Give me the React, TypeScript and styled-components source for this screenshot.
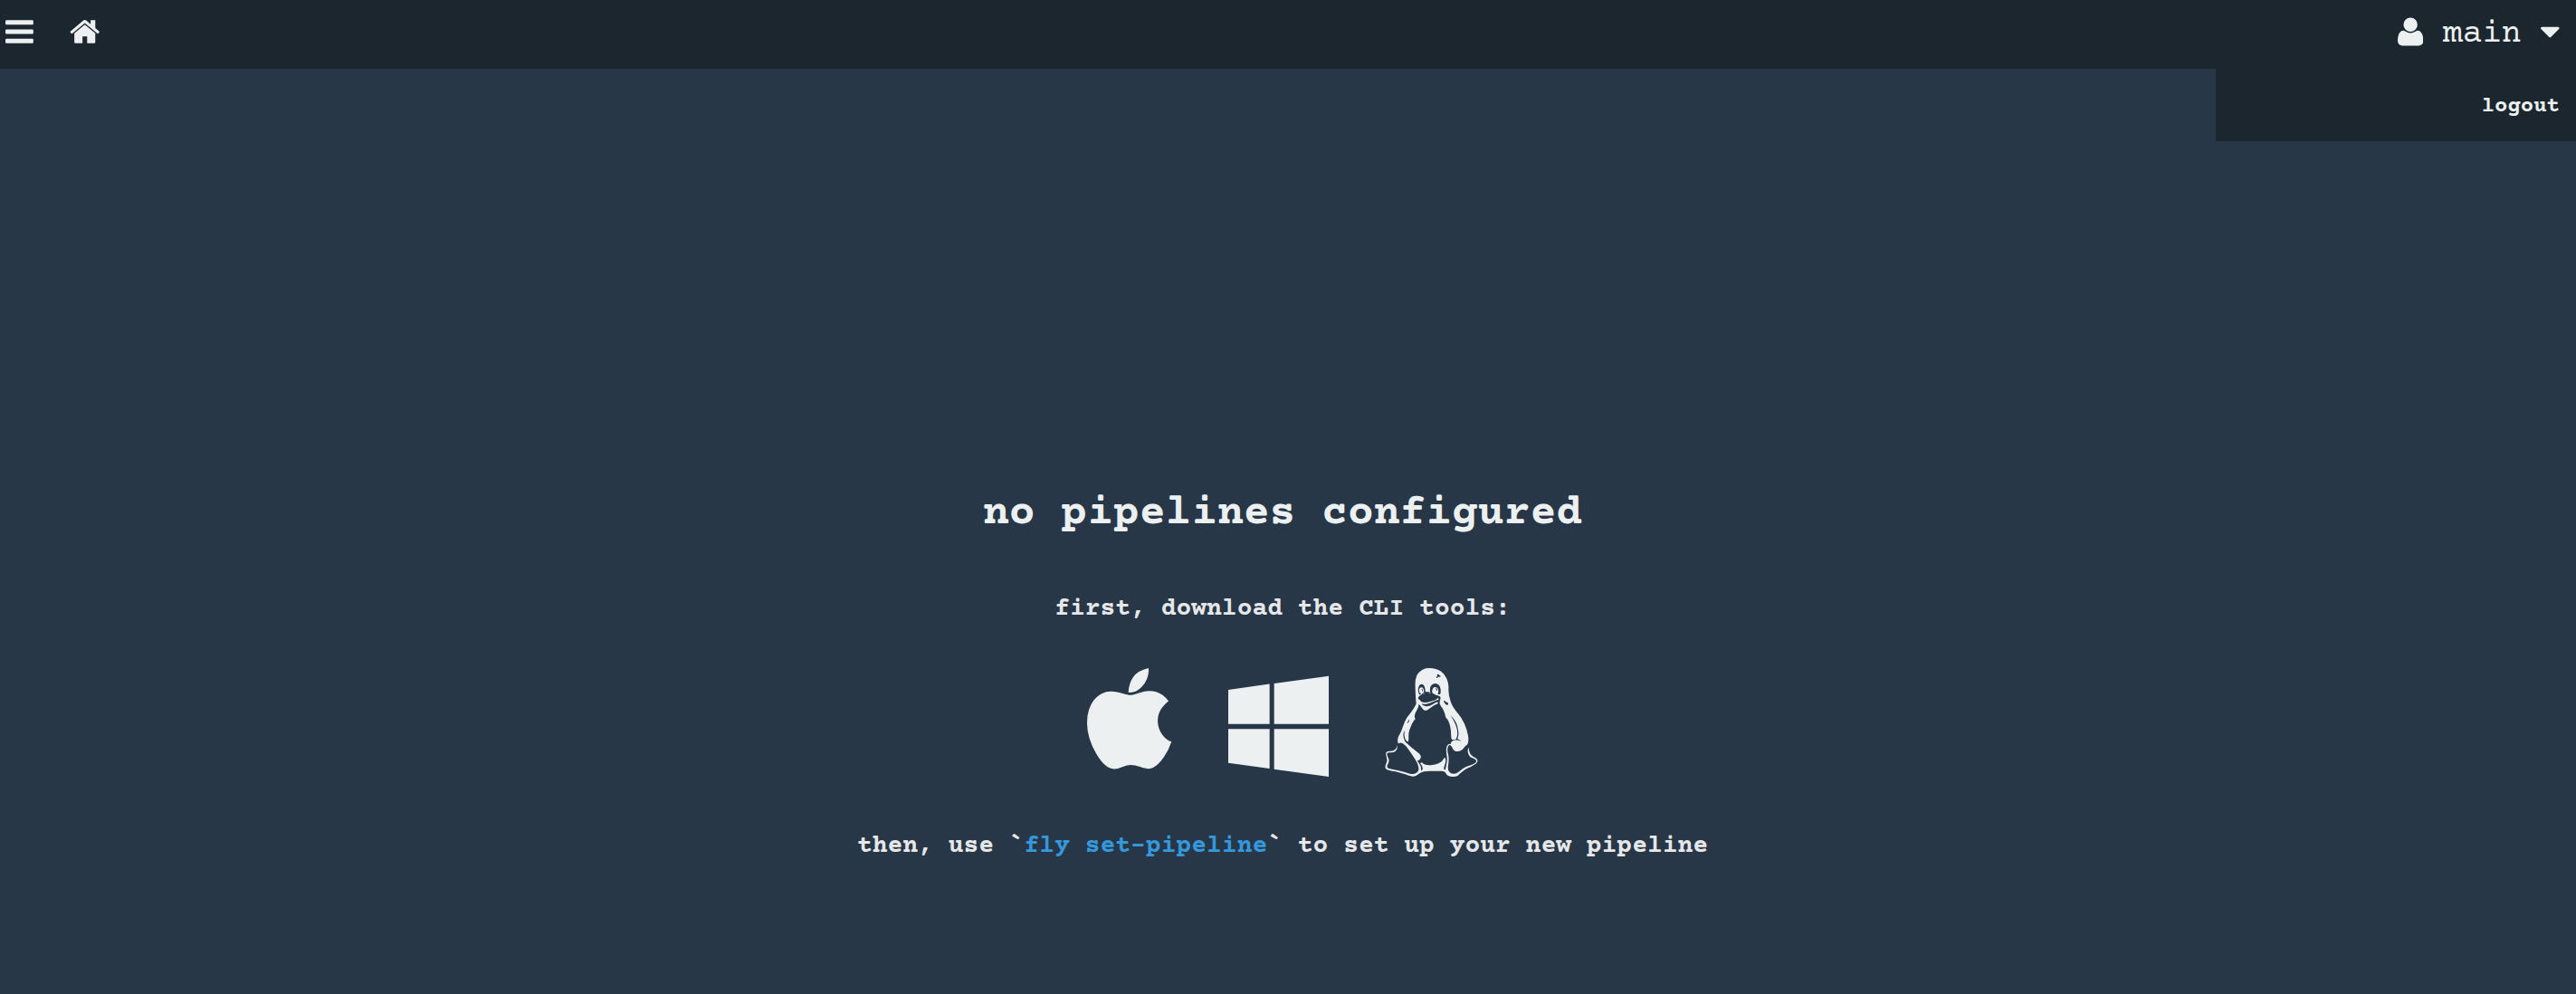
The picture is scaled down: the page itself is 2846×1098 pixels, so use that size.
import React, { useState } from "react";
import styled, { createGlobalStyle } from "styled-components";

const color = {
  page: "#273747",
  bar: "#1c262f",
  text: "#ecf0f1",
  muted: "#e6e7e8",
  accent: "#3498db",
};

const GlobalStyle = createGlobalStyle`
  * { box-sizing: border-box; }
  body {
    margin: 0;
    background: ${color.page};
    color: ${color.text};
    font-family: "Courier Prime", "Courier New", "Liberation Mono", monospace;
  }
`;

const Page = styled.div`
  min-height: 100vh;
  display: flex;
  flex-direction: column;
`;

const TopBar = styled.header`
  position: relative;
  display: flex;
  justify-content: space-between;
  align-items: center;
  height: 76px;
  padding: 0 18px 6px 6px;
  background: ${color.bar};
`;

const Nav = styled.nav`
  display: flex;
  align-items: center;
  gap: 40px;
`;

const IconButton = styled.button`
  display: flex;
  padding: 0;
  border: 0;
  background: none;
  color: inherit;
  cursor: pointer;
`;

const IconLink = styled.a`
  display: flex;
  color: inherit;
`;

const UserButton = styled(IconButton)`
  align-items: center;
  gap: 22px;
  font-family: inherit;
  font-size: 36px;
  line-height: 36px;
`;

const TeamName = styled.span`
  padding-top: 6px;
`;

const UserMenu = styled.div`
  position: absolute;
  top: 100%;
  right: 0;
  width: 14%;
  display: flex;
  justify-content: flex-end;
  padding: 30px 18px 26px;
  background: ${color.bar};
`;

const MenuLink = styled.a`
  color: inherit;
  font-size: 24px;
  font-weight: bold;
  line-height: 24px;
  text-decoration: none;
`;

const Welcome = styled.main`
  flex: 1;
  display: flex;
  flex-direction: column;
  align-items: center;
  padding: 463px 12px 0 0;
`;

const Title = styled.h1`
  margin: 0 0 62px;
  font-size: 48px;
  line-height: 56px;
`;

const Step = styled.h2`
  margin: 0;
  color: ${color.muted};
  font-size: 28px;
  line-height: 32px;
`;

const DocLink = styled.a`
  color: ${color.accent};
  text-decoration: none;
`;

const Downloads = styled.div`
  display: flex;
  gap: 62px;
  margin: 49px 0 61px;
`;

const Glyph = styled.svg<{ $size: number }>`
  display: block;
  height: ${(p) => p.$size}px;
  fill: currentColor;
`;

type GlyphName = "bars" | "home" | "user" | "caret" | "apple" | "windows" | "linux";

const glyphs: Record<GlyphName, { x: number; width: number; d: string; flip?: boolean }> = {
  bars: {
    x: 128,
    width: 1536,
    d: "M1664 1344v128q0 26-19 45t-45 19h-1408q-26 0-45-19t-19-45v-128q0-26 19-45t45-19h1408q26 0 45 19t19 45zm0-512v128q0 26-19 45t-45 19h-1408q-26 0-45-19t-19-45v-128q0-26 19-45t45-19h1408q26 0 45 19t19 45zm0-512v128q0 26-19 45t-45 19h-1408q-26 0-45-19t-19-45v-128q0-26 19-45t45-19h1408q26 0 45 19t19 45z",
  },
  home: {
    x: 64,
    width: 1664,
    d: "M1472 992v480q0 26-19 45t-45 19h-384v-384h-256v384h-384q-26 0-45-19t-19-45v-480q0-1 .5-3t.5-3l575-474 575 474q1 2 1 6zm223-69l-62 74q-8 9-21 11h-3q-13 0-21-7l-692-577-692 577q-12 8-24 7-13-2-21-11l-62-74q-8-10-7-23.5t11-21.5l719-599q32-26 76-26t76 26l244 204v-195q0-14 9-23t23-9h192q14 0 23 9t9 23v408l219 182q10 8 11 21.5t-7 23.5z",
  },
  user: {
    x: 192,
    width: 1408,
    d: "M1600 1405q0 120-73 189.5t-194 69.5h-874q-121 0-194-69.5t-73-189.5q0-53 3.5-103.5t14-109 26.5-108.5 43-97.5 62-81 85.5-53.5 111.5-20q9 0 42 21.5t74.5 48 108 48 133.5 21.5 133.5-21.5 108-48 74.5-48 42-21.5q61 0 111.5 20t85.5 53.5 62 81 43 97.5 26.5 108.5 14 109 3.5 103.5zm-320-893q0 159-112.5 271.5t-271.5 112.5-271.5-112.5-112.5-271.5 112.5-271.5 271.5-112.5 271.5 112.5 112.5 271.5z",
  },
  caret: {
    x: 384,
    width: 1024,
    d: "M1408 704q0 26-19 45l-448 448q-19 19-45 19t-45-19l-448-448q-19-19-19-45t19-45 45-19h896q26 0 45 19t19 45z",
  },
  apple: {
    x: 192,
    width: 1408,
    d: "M1585 1215q-39 125-123 250-129 196-257 196-49 0-140-32-86-32-151-32-61 0-142 33-81 34-132 34-152 0-301-259-147-261-147-503 0-228 113-374 113-144 284-144 72 0 177 30 104 30 138 30 45 0 143-34 102-34 173-34 119 0 213 65 52 36 104 100-79 67-114 118-65 94-65 207 0 124 69 223t158 126zm-376-1173q0 61-29 136-30 75-93 138-54 54-108 72-37 11-104 17 3-149 78-257 74-107 250-148 1 3 2.5 11t2.5 11q0 4 .5 10t.5 10z",
  },
  windows: {
    x: 64,
    width: 1664,
    d: "M746 1006v651l-682-94v-557h682zm0-743v659h-682v-565zm982 743v786l-907-125v-661h907zm0-878v794h-907v-669z",
  },
  linux: {
    x: 0,
    width: 1536,
    flip: true,
    d: "M663 1125q-11 -1 -15.5 -10.5t-8.5 -9.5q-5 -1 -5 5q0 12 19 15h10zM750 1111q-4 -1 -11.5 6.5t-17.5 4.5q24 11 32 -2q3 -6 -3 -9zM399 684q-4 1 -6 -3t-4.5 -12.5t-5.5 -13.5t-10 -13q-7 -10 -1 -12q4 -1 12.5 7t12.5 18q1 3 2 7t2 6t1.5 4.5t0.5 4v3t-1 2.5t-3 2zM1254 325q0 18 -55 42q4 15 7.5 27.5t5 26t3 21.5t0.5 22.5t-1 19.5t-3.5 22t-4 20.5t-5 25t-5.5 26.5q-10 48 -47 103t-72 75q24 -20 57 -83q87 -162 54 -278q-11 -40 -50 -42q-31 -4 -38.5 18.5t-8 83.5t-11.5 107q-9 39 -19.5 69t-19.5 45.5t-15.5 24.5t-13 15t-7.5 7q-14 62 -31 103t-29.5 56t-23.5 33t-15 40q-4 21 6 53.5t4.5 49.5t-44.5 25q-15 3 -44.5 18t-35.5 16q-8 1 -11 26t8 51t36 27q37 3 51 -30t4 -58q-11 -19 -2 -26.5t30 -0.5q13 4 13 36v37q-5 30 -13.5 50t-21 30.5t-23.5 15t-27 7.5q-107 -8 -89 -134q0 -15 -1 -15q-9 9 -29.5 10.5t-33 -0.5t-15.5 5q1 57 -16 90t-45 34q-27 1 -41.5 -27.5t-16.5 -59.5q-1 -15 3.5 -37t13 -37.5t15.5 -13.5q10 3 16 14q4 9 -7 8q-7 0 -15.5 14.5t-9.5 33.5q-1 22 9 37t34 14q17 0 27 -21t9.5 -39t-1.5 -22q-22 -15 -31 -29q-8 -12 -27.5 -23.5t-20.5 -12.5q-13 -14 -15.5 -27t7.5 -18q14 -8 25 -19.5t16 -19t18.5 -13t35.5 -6.5q47 -2 102 15q2 1 23 7t34.5 10.5t29.5 13t21 17.5q9 14 20 8q5 -3 6.5 -8.5t-3 -12t-16.5 -9.5q-20 -6 -56.5 -21.5t-45.5 -19.5q-44 -19 -70 -23q-25 -5 -79 2q-10 2 -9 -2t17 -19q25 -23 67 -22q17 1 36 7t36 14t33.5 17.5t30 17t24.5 12t17.5 2.5t8.5 -11q0 -2 -1 -4.5t-4 -5t-6 -4.5t-8.5 -5t-9 -4.5t-10 -5t-9.5 -4.5q-28 -14 -67.5 -44t-66.5 -43t-49 -1q-21 11 -63 73q-22 31 -25 22q-1 -3 -1 -10q0 -25 -15 -56.5t-29.5 -55.5t-21 -58t11.5 -63q-23 -6 -62.5 -90t-47.5 -141q-2 -18 -1.5 -69t-5.5 -59q-8 -24 -29 -3q-32 31 -36 94q-2 28 4 56q4 19 -1 18l-4 -5q-36 -65 10 -166q5 -12 25 -28t24 -20q20 -23 104 -90.5t93 -76.5q16 -15 17.5 -38t-14 -43t-45.5 -23q8 -15 29 -44.5t28 -54t7 -70.5q46 24 7 92q-4 8 -10.5 16t-9.5 12t-2 6q3 5 13 9.5t20 -2.5q46 -52 166 -36q133 15 177 87q23 38 34 30q12 -6 10 -52q-1 -25 -23 -92q-9 -23 -6 -37.5t24 -15.5q3 19 14.5 77t13.5 90q2 21 -6.5 73.5t-7.5 97t23 70.5q15 18 51 18q1 37 34.5 53t72.5 10.5t60 -22.5zM626 1152q3 17 -2.5 30t-11.5 15q-9 2 -9 -7q2 -5 5 -6q10 0 7 -15q-3 -20 8 -20q3 0 3 3zM1045 955q-2 8 -6.5 11.5t-13 5t-14.5 5.5q-5 3 -9.5 8t-7 8t-5.5 6.5t-4 4t-4 -1.5q-14 -16 7 -43.5t39 -31.5q9 -1 14.5 8t3.5 20zM867 1168q0 11 -5 19.5t-11 12.5t-9 3q-14 -1 -7 -7l4 -2q14 -4 18 -31q0 -3 8 2zM921 1401q0 2 -2.5 5t-9 7t-9.5 6q-15 15 -24 15q-9 -1 -11.5 -7.5t-1 -13t-0.5 -12.5q-1 -4 -6 -10.5t-6 -9t3 -8.5q4 -3 8 0t11 9t15 9q1 1 9 1t15 2t9 7zM1486 60q20 -12 31 -24.5t12 -24t-2.5 -22.5t-15.5 -22t-23.5 -19.5t-30 -18.5t-31.5 -16.5t-32 -15.5t-27 -13q-38 -19 -85.5 -56t-75.5 -64q-17 -16 -68 -19.5t-89 14.5q-18 9 -29.5 23.5t-16.5 25.5t-22 19.5t-47 9.5q-44 1 -130 1q-19 0 -57 -1.5t-58 -2.5q-44 -1 -79.5 -15t-53.5 -30t-43.5 -28.5t-53.5 -11.5q-29 1 -111 31t-146 43q-19 4 -51 9.5t-50 9t-39.5 9.5t-33.5 14.5t-17 19.5q-10 23 7 66.5t18 54.5q1 16 -4 40t-10 42.5t-4.5 36.5t10.5 27q14 12 57 14t60 12q30 18 42 35t12 51q21 -73 -32 -106q-32 -20 -83 -15q-34 3 -43 -10q-13 -15 5 -57q2 -6 8 -18t8.5 -18t4.5 -17t1 -22q0 -15 -17 -49t-14 -48q3 -17 37 -26q20 -6 84.5 -18.5t99.5 -20.5q24 -6 74 -22t82.5 -23t55.5 -4q43 6 64.5 28t23 48t-7.5 58.5t-19 52t-20 36.5q-121 190 -169 242q-68 74 -113 40q-11 -9 -15 15q-3 16 -2 38q1 29 10 52t24 47t22 42q8 21 26.5 72t29.5 78t30 61t39 54q110 143 124 195q-12 112 -16 310q-2 90 24 151.5t106 104.5q39 21 104 21q53 1 106 -13.5t89 -41.5q57 -42 91.5 -121.5t29.5 -147.5q-5 -95 30 -214q34 -113 133 -218q55 -59 99.5 -163t59.5 -191q8 -49 5 -84.5t-12 -55.5t-20 -22q-10 -2 -23.5 -19t-27 -35.5t-40.5 -33.5t-61 -14q-18 1 -31.5 5t-22.5 13.5t-13.5 15.5t-11.5 20.5t-9 19.5q-22 37 -41 30t-28 -49t7 -97q20 -70 1 -195q-10 -65 18 -100.5t73 -33t85 35.5q59 49 89.5 66.5t103.5 42.5q53 18 77 36.5t18.5 34.5t-25 28.5t-51.5 23.5q-33 11 -49.5 48t-15 72.5t15.5 47.5q1 -31 8 -56.5t14.5 -40.5t20.5 -28.5t21 -19t21.5 -13t16.5 -9.5z",
  },
};

function Icon({ name, size = 36 }: { name: GlyphName; size?: number }) {
  const { x, width, d, flip } = glyphs[name];
  return (
    <Glyph $size={size} viewBox={`${x} 0 ${width} 1792`} aria-hidden="true">
      <path d={d} transform={flip ? "translate(0 1536) scale(1 -1)" : undefined} />
    </Glyph>
  );
}

const platforms: { name: GlyphName; label: string }[] = [
  { name: "apple", label: "Download for macOS" },
  { name: "windows", label: "Download for Windows" },
  { name: "linux", label: "Download for Linux" },
];

export default function App() {
  const [menuOpen, setMenuOpen] = useState(true);

  return (
    <>
      <GlobalStyle />
      <Page>
        <TopBar>
          <Nav>
            <IconButton type="button" aria-label="Toggle pipelines">
              <Icon name="bars" />
            </IconButton>
            <IconLink href="#" aria-label="Home">
              <Icon name="home" />
            </IconLink>
          </Nav>
          <UserButton type="button" aria-expanded={menuOpen} onClick={() => setMenuOpen(!menuOpen)}>
            <Icon name="user" />
            <TeamName>main</TeamName>
            <Icon name="caret" />
          </UserButton>
          {menuOpen && (
            <UserMenu>
              <MenuLink href="#logout">logout</MenuLink>
            </UserMenu>
          )}
        </TopBar>
        <Welcome>
          <Title>no pipelines configured</Title>
          <Step>first, download the CLI tools:</Step>
          <Downloads>
            {platforms.map(({ name, label }) => (
              <IconLink key={name} href={`#${name}`} aria-label={label}>
                <Icon name={name} size={120} />
              </IconLink>
            ))}
          </Downloads>
          <Step>
            then, use `<DocLink href="#fly-set-pipeline">fly set-pipeline</DocLink>` to set up your new pipeline
          </Step>
        </Welcome>
      </Page>
    </>
  );
}
